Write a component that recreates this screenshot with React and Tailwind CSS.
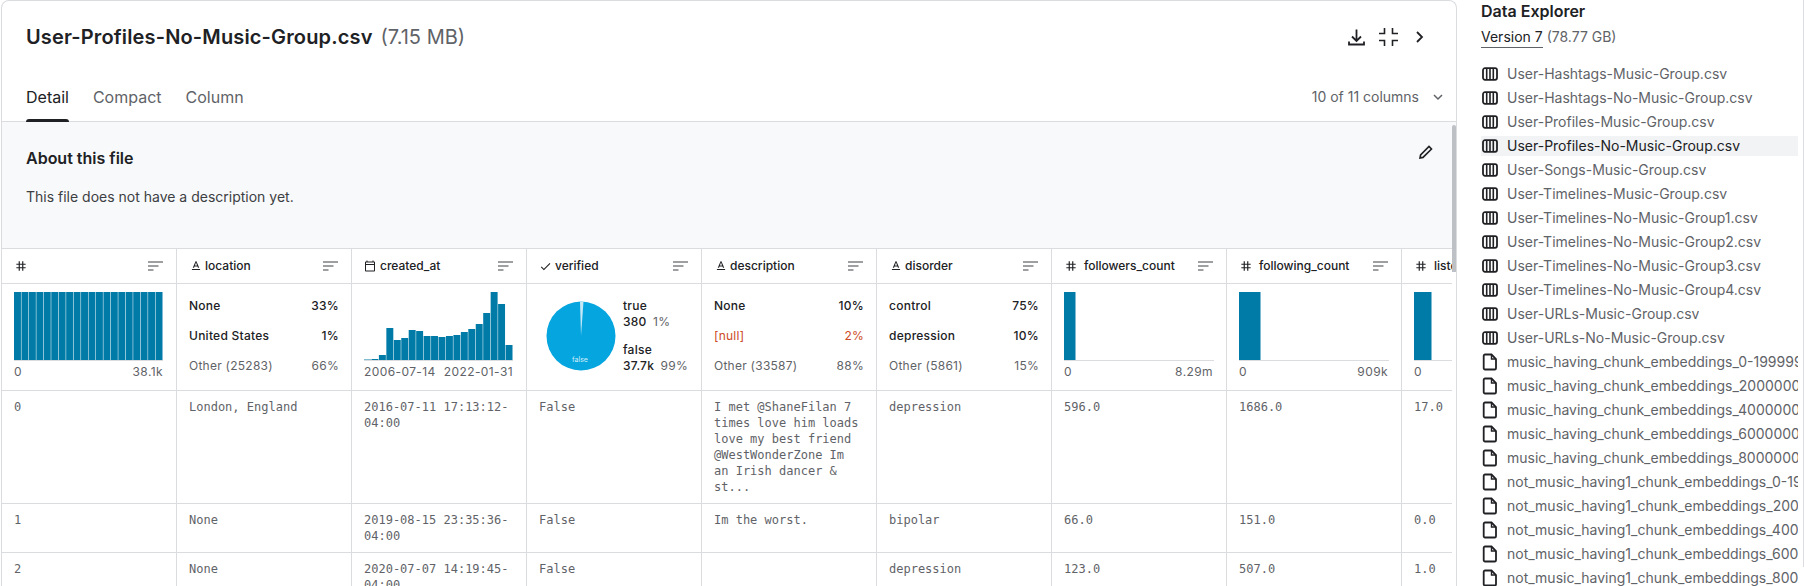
import React from "react";
import { MdTextFormat, MdCheck, MdTag, MdOutlineCalendarToday } from "react-icons/md";

const csvFiles = [
  "User-Hashtags-Music-Group.csv",
  "User-Hashtags-No-Music-Group.csv",
  "User-Profiles-Music-Group.csv",
  "User-Profiles-No-Music-Group.csv",
  "User-Songs-Music-Group.csv",
  "User-Timelines-Music-Group.csv",
  "User-Timelines-No-Music-Group1.csv",
  "User-Timelines-No-Music-Group2.csv",
  "User-Timelines-No-Music-Group3.csv",
  "User-Timelines-No-Music-Group4.csv",
  "User-URLs-Music-Group.csv",
  "User-URLs-No-Music-Group.csv",
];

// names as far as the list shows them
const otherFiles = [
  "music_having_chunk_embeddings_0-199999",
  "music_having_chunk_embeddings_2000000",
  "music_having_chunk_embeddings_4000000",
  "music_having_chunk_embeddings_6000000",
  "music_having_chunk_embeddings_8000000",
  "not_music_having1_chunk_embeddings_0-19",
  "not_music_having1_chunk_embeddings_200",
  "not_music_having1_chunk_embeddings_400",
  "not_music_having1_chunk_embeddings_600",
  "not_music_having1_chunk_embeddings_800",
];

const columns = [
  { name: "", icon: "hash" },
  { name: "location", icon: "text" },
  { name: "created_at", icon: "date" },
  { name: "verified", icon: "check" },
  { name: "description", icon: "text" },
  { name: "disorder", icon: "text" },
  { name: "followers_count", icon: "hash" },
  { name: "following_count", icon: "hash" },
  { name: "listed_count", icon: "hash" },
];

const rows = [
  [
    "0",
    "London, England",
    "2016-07-11 17:13:12-\n04:00",
    "False",
    "I met @ShaneFilan 7 times love him loads love my best friend @WestWonderZone Im an Irish dancer & st...",
    "depression",
    "596.0",
    "1686.0",
    "17.0",
  ],
  ["1", "None", "2019-08-15 23:35:36-\n04:00", "False", "Im the worst.", "bipolar", "66.0", "151.0", "0.0"],
  ["2", "None", "2020-07-07 14:19:45-\n04:00", "False", "", "depression", "123.0", "507.0", "1.0"],
];

// heights of the created_at histogram, out of 68
const dateBars = [0.5, 1, 5, 32, 20, 22, 30, 29, 24, 24, 23, 24, 25, 28, 31, 36, 47, 68, 56, 15];

function TypeIcon({ type }) {
  const cls = "shrink-0 text-[#202124]";
  if (type === "text") return <MdTextFormat size={14} className={`${cls} mr-[2px]`} />;
  if (type === "date") return <MdOutlineCalendarToday size={12} className={`${cls} mr-[4px]`} />;
  if (type === "check") return <MdCheck size={13} className={`${cls} mr-[3px]`} />;
  return <MdTag size={14} className={`${cls} mr-[6px]`} />;
}

function SortIcon() {
  return (
    <svg width="15" height="10" viewBox="0 0 15 10" className="shrink-0" stroke="#3c4043" strokeWidth="1">
      <path d="M0 1h15M0 5h10.500M0 9h5.500" />
    </svg>
  );
}

function TableFileIcon() {
  return (
    <svg width="16" height="16" viewBox="0 0 16 16" fill="none" stroke="#202124" className="shrink-0">
      <rect x="1" y="2.200" width="14" height="11.600" rx="2" strokeWidth="1.800" />
      <path d="M4.700 2.500v11M8 2.500v11M11.300 2.500v11" strokeWidth="1.600" />
    </svg>
  );
}

function PlainFileIcon() {
  return (
    <svg width="16" height="18" viewBox="0 0 16 18" fill="none" stroke="#202124" strokeWidth="1.800" className="shrink-0">
      <path d="M3 1.500h6.500L14 6v9.200a1.300 1.300 0 0 1-1.300 1.300H3a1.300 1.300 0 0 1-1.300-1.300V2.800A1.300 1.300 0 0 1 3 1.500z" />
      <path d="M9.500 1.500V6H14" strokeWidth="1.400" />
    </svg>
  );
}

function Histogram({ bars }) {
  const w = 149 / bars.length;
  return (
    <svg width="149" height="69" viewBox="0 0 149 69" className="block">
      {bars.map((h, i) => (
        <rect key={i} x={i * w} y={68 - h} width={w - 0.5} height={h} fill="#007ba7" />
      ))}
      <rect x="0" y="68" width="149" height="1" fill="#dadce0" />
    </svg>
  );
}

function SingleBar({ width }) {
  return (
    <svg width="150" height="69" viewBox="0 0 150 69" className="block">
      <rect x="0" y="0" width={width} height="68" fill="#007ba7" />
      <rect x="0" y="68" width="150" height="1" fill="#dadce0" />
    </svg>
  );
}

function ChartCell({ chart, left, right }) {
  return (
    <div className="w-[175px] shrink-0 border-r border-[#dadce0] pl-3 pt-[8px]">
      {chart}
      <div className="mt-[3px] flex w-[149px] justify-between text-xs leading-4 tracking-[0.4px] text-[#5f6368]">
        <span>{left}</span>
        <span>{right}</span>
      </div>
    </div>
  );
}

function CategoryCell({ items }) {
  return (
    <div className="flex w-[175px] shrink-0 flex-col gap-[14px] border-r border-[#dadce0] px-3 pt-[14px] text-xs leading-4 tracking-[0.25px]">
      {items.map((it) => (
        <div key={it.label} className={`flex justify-between ${it.cls}`}>
          <span>{it.label}</span>
          <span>{it.pct}</span>
        </div>
      ))}
    </div>
  );
}

function PieCell() {
  return (
    <div className="flex w-[175px] shrink-0 items-start border-r border-[#dadce0] pl-[19px]">
      <svg width="70" height="70" viewBox="0 0 70 70" className="mt-[17px] shrink-0">
        <circle cx="35" cy="35" r="34.500" fill="#05a5df" />
        <path d="M35 35 L34 0.500 A34.500 34.500 0 0 1 37.500 0.600 Z" fill="#c5e8f6" />
        <text x="34" y="61" textAnchor="middle" fontSize="7" fill="#d5effa">
          false
        </text>
      </svg>
      <div className="ml-[7px] flex flex-col gap-[12px] pt-[14px] text-xs leading-4 font-medium tracking-[0.25px] text-[#202124]">
        <div>
          <div>true</div>
          <div>
            380 <span className="ml-[3px] font-normal text-[#5f6368]">1%</span>
          </div>
        </div>
        <div>
          <div>false</div>
          <div>
            37.7k <span className="ml-[3px] font-normal text-[#5f6368]">99%</span>
          </div>
        </div>
      </div>
    </div>
  );
}

export default function App() {
  return (
    <div className="flex h-[586px] w-[1804px] overflow-hidden bg-white font-['Inter',sans-serif] text-[#202124]">
      {/* main panel */}
      <div className="relative ml-px flex h-[600px] w-[1456px] shrink-0 flex-col rounded-t-lg border-x border-t border-[#dadce0]">
        <div className="flex h-[72px] shrink-0 items-center justify-between pl-[24px] pr-[32px]">
          <div className="flex items-baseline gap-[8px]">
            <span className="text-xl font-semibold tracking-[0.15px]">User-Profiles-No-Music-Group.csv</span>
            <span className="text-xl text-[#5f6368]">(7.15 MB)</span>
          </div>
          <div className="flex items-center gap-[14px]">
            <svg width="17" height="17" viewBox="0 0 17 17" fill="none" stroke="#202124" strokeWidth="1.800">
              <path d="M8.500 0.500v11M4 7.500l4.500 4.500L13 7.500M1 12.500v3h15v-3" />
            </svg>
            <svg width="19" height="18" viewBox="0 0 19 18" fill="none" stroke="#202124" strokeWidth="1.600">
              <path d="M0 5.500h5.500V0M19 5.500h-5.500V0M0 12.500h5.500V18M19 12.500h-5.500V18" />
            </svg>
            <svg width="9" height="12" viewBox="0 0 9 12" fill="none" stroke="#202124" strokeWidth="1.800" className="ml-[3px]">
              <path d="M2 1l5 5-5 5" />
            </svg>
          </div>
        </div>

        <div className="flex h-[49px] shrink-0 items-stretch justify-between border-b border-[#dadce0] pl-[24px] pr-[13px] text-base text-[#5f6368]">
          <div className="flex gap-6">
            <div className="relative flex items-center text-[#202124]">
              Detail
              <div className="absolute inset-x-0 bottom-[-1px] h-[3px] rounded-t-sm bg-[#202124]" />
            </div>
            <div className="flex items-center">Compact</div>
            <div className="flex items-center">Column</div>
          </div>
          <div className="flex items-center gap-[14px] text-sm">
            10 of 11 columns
            <svg width="10" height="7" viewBox="0 0 10 7" fill="none" stroke="#5f6368" strokeWidth="1.500">
              <path d="M1 1l4 4 4-4" />
            </svg>
          </div>
        </div>

        <div className="flex h-[127px] shrink-0 flex-col border-b border-[#dadce0] bg-[#f8f9fa] pl-[24px] pr-[20px]">
          <div className="mt-[24px] flex h-6 items-center justify-between">
            <span className="text-base leading-5 font-semibold">About this file</span>
            <svg width="14" height="14" viewBox="0 0 14 14" fill="none" stroke="#202124" strokeWidth="1.600" className="mr-[3px] -mt-[12px]">
              <path d="M1 13l.6-3L10 1.500l2.500 2.500L4 12.400z" />
            </svg>
          </div>
          <p className="mt-[17px] text-sm leading-5 text-[#3c4043]">This file does not have a description yet.</p>
        </div>

        {/* table */}
        <div className="mr-1 flex-1 overflow-hidden">
          <div className="flex h-[35px] w-max border-b border-[#dadce0]">
            {columns.map((col, i) => (
              <div key={i} className="flex w-[175px] shrink-0 items-center justify-between border-r border-[#dadce0] pl-3 pr-[13px]">
                <div className="flex items-center text-xs font-medium text-[#202124]">
                  <TypeIcon type={col.icon} />
                  {col.name}
                </div>
                <SortIcon />
              </div>
            ))}
          </div>

          <div className="flex h-[107px] w-max border-b border-[#dadce0]">
            <ChartCell chart={<Histogram bars={Array(20).fill(68)} />} left="0" right="38.1k" />
            <CategoryCell
              items={[
                { label: "None", pct: "33%", cls: "font-medium text-[#202124]" },
                { label: "United States", pct: "1%", cls: "font-medium text-[#202124]" },
                { label: "Other (25283)", pct: "66%", cls: "text-[#5f6368]" },
              ]}
            />
            <ChartCell chart={<Histogram bars={dateBars} />} left="2006-07-14" right="2022-01-31" />
            <PieCell />
            <CategoryCell
              items={[
                { label: "None", pct: "10%", cls: "font-medium text-[#202124]" },
                { label: "[null]", pct: "2%", cls: "text-[#cc4a26]" },
                { label: "Other (33587)", pct: "88%", cls: "text-[#5f6368]" },
              ]}
            />
            <CategoryCell
              items={[
                { label: "control", pct: "75%", cls: "font-medium text-[#202124]" },
                { label: "depression", pct: "10%", cls: "font-medium text-[#202124]" },
                { label: "Other (5861)", pct: "15%", cls: "text-[#5f6368]" },
              ]}
            />
            <ChartCell chart={<SingleBar width={11.5} />} left="0" right="8.29m" />
            <ChartCell chart={<SingleBar width={21.5} />} left="0" right="909k" />
            <ChartCell chart={<SingleBar width={17.5} />} left="0" right="" />
          </div>

          {rows.map((row) => (
            <div key={row[0]} className="flex w-max border-b border-[#dadce0]">
              {row.map((val, i) => (
                <div
                  key={i}
                  className="w-[175px] shrink-0 whitespace-pre-line border-r border-[#dadce0] px-3 py-2 font-['DejaVu_Sans_Mono',monospace] text-xs leading-4 text-[#5f6368]"
                >
                  {val}
                </div>
              ))}
            </div>
          ))}
        </div>

        {/* scrollbar thumb */}
        <div className="absolute right-0 top-[124px] h-[147px] w-1 rounded-t-sm bg-[#bdc1c6]" />
      </div>

      {/* data explorer */}
      <div className="relative flex-1 pl-6">
        <div className="mt-px text-base leading-5 font-semibold">Data Explorer</div>
        <div className="mt-[7px] flex h-[18px] items-center text-sm text-[#5f6368]">
          <span className="border-b border-[#5f6368] text-[#202124]">Version 7</span>
          <span className="ml-1">(78.77 GB)</span>
        </div>
        <div className="mt-[16px] w-[317px]">
          {csvFiles.map((name) => {
            const active = name === "User-Profiles-No-Music-Group.csv";
            return (
              <div key={name} className="flex h-6 items-center">
                <div className={`flex h-5 w-full items-center gap-[9px] pl-px pr-2 text-sm ${active ? "bg-[#f1f3f4] text-[#202124]" : "text-[#5f6368]"}`}>
                  <TableFileIcon />
                  <span className="overflow-hidden whitespace-nowrap">{name}</span>
                </div>
              </div>
            );
          })}
          {otherFiles.map((name) => (
            <div key={name} className="flex h-6 items-center gap-[9px] pl-px text-sm text-[#5f6368]">
              <PlainFileIcon />
              <span className="overflow-hidden whitespace-nowrap">{name}</span>
            </div>
          ))}
        </div>
        <div className="absolute right-0 top-0 h-[567px] w-px bg-[#dadce0]" />
      </div>
    </div>
  );
}
